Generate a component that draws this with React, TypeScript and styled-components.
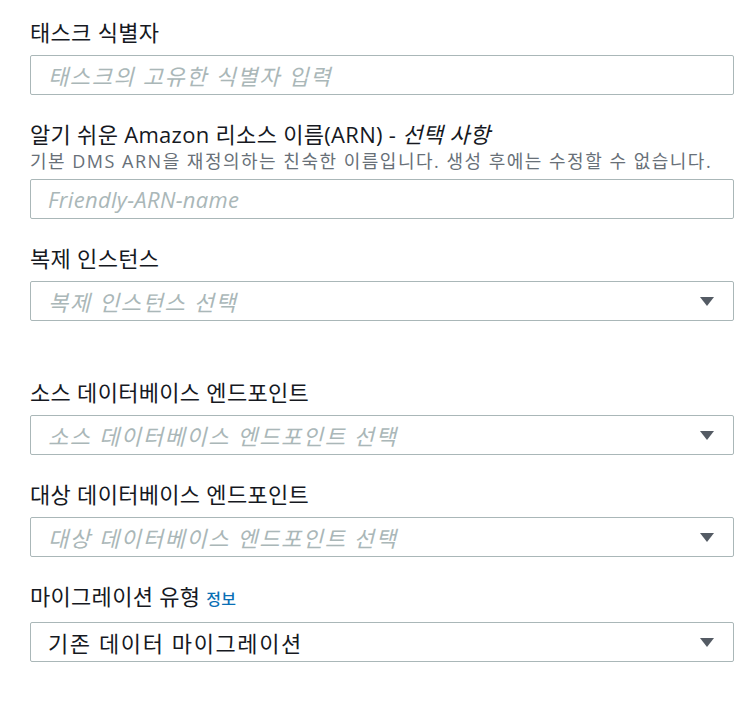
import React, { ReactElement } from 'react';
import styled, { createGlobalStyle } from 'styled-components';

const GlobalStyle = createGlobalStyle`
    html, body {
        margin: 0;
        padding: 0;
        background: #ffffff;
    }
    body {
        font-family: "Open Sans", "Noto Sans CJK KR", sans-serif;
        color: #16191f;
    }
`;

const Form = styled.div`
    display: flex;
    flex-direction: column;
    width: 704px;
    padding: 20px 0 0 30px;
`;

const Field = styled.div<{ spaced?: boolean }>`
    display: flex;
    flex-direction: column;
    margin-bottom: ${({ spaced }) => (spaced ? '59px' : '27px')};
`;

const Label = styled.div`
    font-size: 22px;
    line-height: 24px;
    letter-spacing: 0.3px;
    color: #16191f;
    white-space: nowrap;
`;

const Optional = styled.span`
    font-style: italic;
`;

const InfoLink = styled.span`
    margin-left: 6px;
    font-size: 16px;
    font-weight: 500;
    color: #0a6fb5;
`;

const Description = styled.div`
    margin-top: 5px;
    font-size: 18px;
    line-height: 20px;
    letter-spacing: 1.5px;
    color: #687078;
    white-space: nowrap;
`;

const Control = styled.div<{ hasValue?: boolean; described?: boolean; latin?: boolean }>`
    display: flex;
    align-items: center;
    box-sizing: border-box;
    height: 40px;
    margin-top: ${({ described }) => (described ? '8px' : '11px')};
    padding: 0 19px 0 17px;
    border: 1px solid #aab7b8;
    border-radius: 2px;
    background: #ffffff;
    font-size: 22px;
    letter-spacing: ${({ latin }) => (latin ? '0.3px' : '1.6px')};
    font-style: ${({ hasValue }) => (hasValue ? 'normal' : 'italic')};
    color: ${({ hasValue }) => (hasValue ? '#16191f' : '#aab7b8')};
`;

const ControlText = styled.span`
    flex: 1;
    white-space: nowrap;
`;

const Caret = styled.span`
    width: 0;
    height: 0;
    border-left: 7px solid transparent;
    border-right: 7px solid transparent;
    border-top: 9px solid #545b64;
`;

interface FieldProps {
    label: React.ReactNode;
    description?: string;
    text: string;
    hasValue?: boolean;
    select?: boolean;
    spaced?: boolean;
    latin?: boolean;
}

const FormField = ({ label, description, text, hasValue, select, spaced, latin }: FieldProps): ReactElement => (
    <Field spaced={spaced}>
        <Label>{label}</Label>
        {description && <Description>{description}</Description>}
        <Control hasValue={hasValue} described={!!description} latin={latin}>
            <ControlText>{text}</ControlText>
            {select && <Caret />}
        </Control>
    </Field>
);

export default (): ReactElement => (
    <>
        <GlobalStyle />
        <Form>
            <FormField label="태스크 식별자" text="태스크의 고유한 식별자 입력" />
            <FormField
                label={
                    <>
                        알기 쉬운 Amazon 리소스 이름(ARN) - <Optional>선택 사항</Optional>
                    </>
                }
                description="기본 DMS ARN을 재정의하는 친숙한 이름입니다. 생성 후에는 수정할 수 없습니다."
                text="Friendly-ARN-name"
                latin
            />
            <FormField label="복제 인스턴스" text="복제 인스턴스 선택" select spaced />
            <FormField label="소스 데이터베이스 엔드포인트" text="소스 데이터베이스 엔드포인트 선택" select />
            <FormField label="대상 데이터베이스 엔드포인트" text="대상 데이터베이스 엔드포인트 선택" select />
            <FormField
                label={
                    <>
                        마이그레이션 유형<InfoLink>정보</InfoLink>
                    </>
                }
                text="기존 데이터 마이그레이션"
                hasValue
                select
            />
        </Form>
    </>
);
